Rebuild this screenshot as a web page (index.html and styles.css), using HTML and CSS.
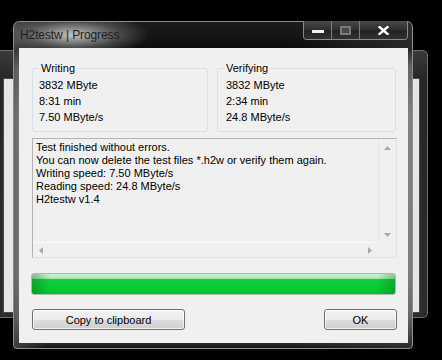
FILE: index.html
```html
<!DOCTYPE html>
<html lang="en">
<head>
  <meta charset="UTF-8" />
  <title>H2testw | Progress</title>
  <link rel="stylesheet" href="styles.css">
</head>
<body>
  <div class="desk">
    <div class="backwin"><div class="backclient"></div></div>

    <div class="win">
      <div class="titlebar">
        <span class="title">H2testw | Progress</span>
        <div class="caption">
          <span class="cbtn min"><i></i></span>
          <span class="cbtn max"><i></i></span>
          <span class="cbtn close">
            <svg width="11" height="9" viewBox="0 0 11 9">
              <path d="M1.5 1 L9.5 8 M9.5 1 L1.5 8" stroke="#fff" stroke-width="2.4" stroke-linecap="square"/>
            </svg>
          </span>
        </div>
      </div>

      <div class="client">
        <div class="groups">
          <div class="group writing">
            <span class="legend">Writing</span>
            <div>3832 MByte</div>
            <div>8:31 min</div>
            <div>7.50 MByte/s</div>
          </div>
          <div class="group verifying">
            <span class="legend">Verifying</span>
            <div>3832 MByte</div>
            <div>2:34 min</div>
            <div>24.8 MByte/s</div>
          </div>
        </div>

        <div class="log">
          <div class="log-text">
            <div>Test finished without errors.</div>
            <div>You can now delete the test files *.h2w or verify them again.</div>
            <div>Writing speed: 7.50 MByte/s</div>
            <div>Reading speed: 24.8 MByte/s</div>
            <div>H2testw v1.4</div>
          </div>
          <div class="vscroll">
            <svg width="7" height="4" viewBox="0 0 7 4"><path d="M0 4 L3.5 0 L7 4 Z" fill="#a8a8a8"/></svg>
            <svg width="7" height="4" viewBox="0 0 7 4"><path d="M0 0 L3.5 4 L7 0 Z" fill="#a8a8a8"/></svg>
          </div>
          <div class="hscroll">
            <svg width="4" height="7" viewBox="0 0 4 7"><path d="M4 0 L0 3.5 L4 7 Z" fill="#a8a8a8"/></svg>
            <svg width="4" height="7" viewBox="0 0 4 7"><path d="M0 0 L4 3.5 L0 7 Z" fill="#a8a8a8"/></svg>
          </div>
          <div class="corner"></div>
        </div>

        <div class="progress"><div class="fill" style="width: 100%"></div></div>

        <div class="buttons">
          <button class="btn copy">Copy to clipboard</button>
          <button class="btn ok">OK</button>
        </div>
      </div>
    </div>
  </div>
</body>
</html>
```

FILE: styles.css
```css
body {
  margin: 0;
  background: #000;
  font-family: 'Liberation Sans', Arial, sans-serif;
  font-size: 11px;
  color: #000;
  overflow: hidden;
}
.desk {
  position: relative;
  width: 442px;
  height: 360px;
}

/* window sitting behind the dialog */
.backwin {
  position: absolute;
  left: -30px;
  top: 50px;
  width: 458px;
  height: 268px;
  box-sizing: border-box;
  border: 1px solid #6c6c6c;
  border-radius: 5px;
  background: linear-gradient(to bottom, #3a3a3a, #262626 30px, #2c2c2c);
  padding: 27px 7px 4px 32px;
}
.backclient {
  height: 100%;
  box-sizing: border-box;
  border: 1px solid #4a4a4a;
  background: #e4e6e7;
}

/* main dialog */
.win {
  position: absolute;
  left: 13px;
  top: 21px;
  width: 400px;
  height: 328px;
  box-sizing: border-box;
  border: 1px solid #8d8d8d;
  border-radius: 6px 6px 4px 4px;
  padding: 0 4px 5px 5px;
  display: flex;
  flex-direction: column;
  background:
    radial-gradient(ellipse 78px 22px at 58px 13px, rgba(215, 215, 215, 0.9), rgba(140, 140, 140, 0.45) 60%, rgba(0, 0, 0, 0) 100%),
    linear-gradient(to right, rgba(70, 70, 70, 0.8) 0, rgba(0, 0, 0, 0) 8%, rgba(0, 0, 0, 0) 70%, rgba(60, 60, 60, 0.6) 100%),
    linear-gradient(to bottom, #1c1c1c 0, #0c0c0c 27px, #9aa0a3 45px, #dde1e3 90px, #d9dcde 250px, #9ea2a4 295px, #141414 326px);
}
.titlebar {
  height: 26px;
  display: flex;
  align-items: flex-start;
  justify-content: space-between;
}
.title {
  margin-top: 6px;
  margin-left: 1px;
  font-size: 12px;
  color: #1c1c1c;
  letter-spacing: -0.1px;
}
.caption {
  margin-top: -1px;
  height: 19px;
  display: flex;
  box-sizing: border-box;
  border: 1px solid #8a8a8a;
  border-top: none;
  border-radius: 0 0 4px 4px;
  overflow: hidden;
}
.cbtn {
  display: flex;
  align-items: center;
  justify-content: center;
  background: linear-gradient(to bottom, #4a4a4a, #2e2e2e 50%, #232323 51%, #303030);
  border-right: 1px solid #7c7c7c;
}
.cbtn.min { width: 27px; }
.cbtn.max { width: 27px; }
.cbtn.close { width: 47px; border-right: none; }
.cbtn.min i {
  width: 12px;
  height: 3px;
  background: #f2f2f2;
  margin-top: 3px;
}
.cbtn.max i {
  width: 7px;
  height: 5px;
  border: 2px solid #7a7a7a;
  background: #4a4a4a;
}

/* client area */
.client {
  flex: 1;
  background: #f0f0f0;
  padding: 20px 12px 0 13px;
  display: flex;
  flex-direction: column;
}
.groups {
  display: flex;
  gap: 9px;
}
.group {
  position: relative;
  height: 64px;
  box-sizing: border-box;
  border: 1px solid #d5dfe5;
  border-radius: 3px;
  padding: 8px 0 0 6px;
  line-height: 16px;
}
.group.writing { width: 176px; }
.group.verifying { flex: 1; padding-left: 8px; }
.legend {
  position: absolute;
  top: -9px;
  left: 6px;
  padding: 0 2px;
  background: #f0f0f0;
  line-height: 16px;
}

.log {
  margin-top: 6px;
  margin-right: -1px;
  height: 120px;
  box-sizing: border-box;
  border: 1px solid #b4b4b4;
  border-right-color: #e2e2e2;
  border-bottom-color: #e2e2e2;
  display: grid;
  grid-template-columns: 1fr 18px;
  grid-template-rows: 1fr 15px;
}
.log-text {
  padding: 2px 3px;
  line-height: 13px;
  white-space: nowrap;
  overflow: hidden;
}
.vscroll {
  border-left: 1px solid #e6e6e6;
  display: flex;
  flex-direction: column;
  align-items: center;
  justify-content: space-between;
  padding: 7px 0 5px;
}
.hscroll {
  border-top: 1px solid #fafafa;
  display: flex;
  align-items: center;
  justify-content: space-between;
  padding: 0 6px 0 6px;
}
.corner {
  background: #f0f0f0;
}

.progress {
  margin-top: 15px;
  margin-left: -1px;
  height: 22px;
  box-sizing: border-box;
  border: 1px solid #b5b5b5;
  border-radius: 3px;
  background: #e6e6e6;
  overflow: hidden;
}
.fill {
  height: 100%;
  background:
    linear-gradient(to right, rgba(0, 90, 20, 0.35) 0, rgba(0, 0, 0, 0) 5%, rgba(0, 0, 0, 0) 95%, rgba(0, 90, 20, 0.3) 100%),
    linear-gradient(to bottom, #c9f7cd 0, #a9efb2 22%, #12d23c 26%, #05cc33 70%, #0fbb31 100%);
}

.buttons {
  margin-top: 14px;
  display: flex;
  justify-content: space-between;
}
.btn {
  height: 21px;
  box-sizing: border-box;
  border: 1px solid #707070;
  border-radius: 3px;
  background: linear-gradient(to bottom, #f3f3f3 0, #ebebeb 50%, #dddddd 51%, #cfcfcf 100%);
  box-shadow: inset 0 0 0 1px rgba(255, 255, 255, 0.7);
  font-family: 'Liberation Sans', Arial, sans-serif;
  font-size: 11px;
  color: #000;
  padding: 0;
}
.btn.copy { width: 153px; }
.btn.ok { width: 73px; margin-right: -1px; }
```
